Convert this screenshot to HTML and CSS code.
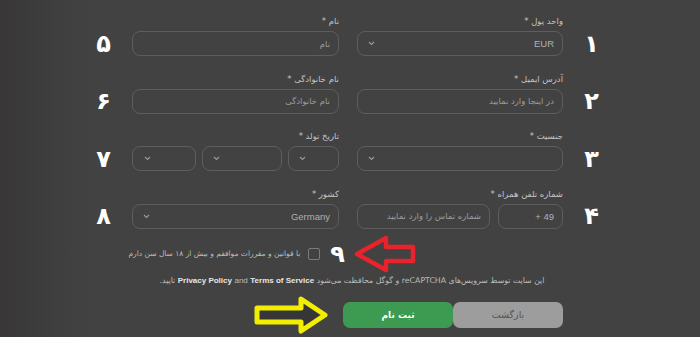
FILE: index.html
```html
<!DOCTYPE html>
<html lang="fa">
<head>
<meta charset="utf-8">
<title>ثبت نام</title>
<link rel="stylesheet" href="styles.css">
</head>
<body>
<div class="page">
  <form class="form" dir="rtl">
    <div class="num">۱</div>
    <div class="field right">
      <div class="label">واحد پول *</div>
      <div class="box select"><span class="val">EUR</span><svg class="chev" width="7" height="5" viewBox="0 0 7 5"><path d="M1 1l2.5 2.5L6 1" fill="none" stroke="#9a9a9a" stroke-width="1.1"/></svg></div>
    </div>
    <div class="field">
      <div class="label">نام *</div>
      <div class="box"><span class="ph">نام</span></div>
    </div>
    <div class="num">۵</div>

    <div class="num">۲</div>
    <div class="field right">
      <div class="label">آدرس ایمیل *</div>
      <div class="box"><span class="ph">در اینجا وارد نمایید</span></div>
    </div>
    <div class="field">
      <div class="label">نام خانوادگی *</div>
      <div class="box"><span class="ph">نام خانوادگی</span></div>
    </div>
    <div class="num">۶</div>

    <div class="num">۳</div>
    <div class="field right">
      <div class="label">جنسیت *</div>
      <div class="box select"><span class="val"></span><svg class="chev" width="7" height="5" viewBox="0 0 7 5"><path d="M1 1l2.5 2.5L6 1" fill="none" stroke="#9a9a9a" stroke-width="1.1"/></svg></div>
    </div>
    <div class="field">
      <div class="label">تاریخ تولد *</div>
      <div class="split">
        <div class="box select day"><span class="val"></span><svg class="chev" width="7" height="5" viewBox="0 0 7 5"><path d="M1 1l2.5 2.5L6 1" fill="none" stroke="#9a9a9a" stroke-width="1.1"/></svg></div>
        <div class="box select month"><span class="val"></span><svg class="chev" width="7" height="5" viewBox="0 0 7 5"><path d="M1 1l2.5 2.5L6 1" fill="none" stroke="#9a9a9a" stroke-width="1.1"/></svg></div>
        <div class="box select year"><span class="val"></span><svg class="chev" width="7" height="5" viewBox="0 0 7 5"><path d="M1 1l2.5 2.5L6 1" fill="none" stroke="#9a9a9a" stroke-width="1.1"/></svg></div>
      </div>
    </div>
    <div class="num">۷</div>

    <div class="num">۴</div>
    <div class="field right">
      <div class="label">شماره تلفن همراه *</div>
      <div class="split phone">
        <div class="box code"><span class="val">49 +</span></div>
        <div class="box tel"><span class="ph">شماره تماس را وارد نمایید</span></div>
      </div>
    </div>
    <div class="field">
      <div class="label">کشور *</div>
      <div class="box select"><span class="val">Germany</span><svg class="chev" width="7" height="5" viewBox="0 0 7 5"><path d="M1 1l2.5 2.5L6 1" fill="none" stroke="#9a9a9a" stroke-width="1.1"/></svg></div>
    </div>
    <div class="num">۸</div>
  </form>

  <div class="agree-row">
    <span class="agree-text" dir="rtl">با قوانین و مقررات موافقم و بیش از ۱۸ سال سن دارم</span>
    <span class="check"></span>
    <span class="num nine">۹</span>
    <svg class="arrow-red" width="64" height="38" viewBox="0 0 64 38"><path d="M4 19L33 3V12H60V26H33V35Z" fill="none" stroke="#e8232b" stroke-width="4.5" stroke-linejoin="round"/></svg>
  </div>

  <p class="notice" dir="rtl">این سایت توسط سرویس‌های reCAPTCHA و گوگل محافظت می‌شود <bdi><b>Terms of Service</b></bdi> <bdi>and</bdi> <bdi><b>Privacy Policy</b></bdi> تایید.</p>

  <div class="actions">
    <svg class="arrow-yellow" width="76" height="40" viewBox="0 0 76 40"><path d="M4 13H48V4L72 20L48 36V27H4Z" fill="#363636" stroke="#f2ee00" stroke-width="5" stroke-linejoin="round"/></svg>
    <div class="btns" dir="rtl">
      <button class="btn back" type="button">بازگشت</button>
      <button class="btn submit" type="button">ثبت نام</button>
    </div>
  </div>
</div>
</body>
</html>
```
FILE: styles.css
```css
html, body {
  margin: 0;
  padding: 0;
}
body {
  width: 700px;
  height: 337px;
  overflow: hidden;
  background: linear-gradient(to right, #393737 0px, #3f3e3e 50px, #424242 90px, #424242 100%);
  font-family: "Liberation Sans", "DejaVu Sans", sans-serif;
  color: #bdbdbd;
}
.page {
  width: 700px;
}
.form {
  width: 545px;
  margin: 0 0 0 75px;
  padding-top: 15px;
  display: grid;
  grid-template-columns: 57px 224px 207px 57px;
  row-gap: 16.5px;
}
.field {
  display: flex;
  flex-direction: column;
}
.field.right {
  padding-inline-end: 18px;
}
.label {
  font-family: "DejaVu Sans", sans-serif;
  font-size: 8.5px;
  line-height: 12px;
  margin-bottom: 4px;
  color: #c4c4c4;
}
.box {
  box-sizing: border-box;
  height: 25px;
  border: 1px solid #5e5e5e;
  border-radius: 8px;
  display: flex;
  align-items: center;
  justify-content: space-between;
  padding: 0 8px 0 10px;
  font-size: 9px;
}
.val {
  color: #b0b0b0;
  font-family: "Liberation Sans", "DejaVu Sans", sans-serif;
  font-size: 9.5px;
}
.ph {
  color: #9c9c9c;
  font-family: "DejaVu Sans", sans-serif;
  font-size: 8.5px;
}
.chev {
  display: block;
}
.split {
  display: flex;
  gap: 6px;
}
.split .day { width: 51px; }
.split .month { width: 80px; }
.split .year { width: 64px; padding-left: 11px; }
.split.phone { gap: 8px; }
.code { width: 65px; }
.tel { flex: 1; }
.num {
  align-self: end;
  height: 25px;
  display: flex;
  align-items: center;
  justify-content: center;
  font-family: "DejaVu Sans", sans-serif;
  font-weight: bold;
  font-size: 24px;
  color: #ffffff;
}
.agree-row {
  display: flex;
  justify-content: flex-end;
  align-items: center;
  padding-right: 283px;
  margin-top: 6px;
  height: 38px;
}
.agree-text {
  font-family: "DejaVu Sans", sans-serif;
  font-size: 7.5px;
  color: #bdbdbd;
}
.check {
  box-sizing: border-box;
  width: 12px;
  height: 12px;
  border: 1px solid #7a7a7a;
  border-radius: 2px;
  margin-left: 8px;
}
.num.nine {
  align-self: center;
  height: 30px;
  margin-left: 10px;
  margin-right: 8px;
}
.arrow-red {
  display: block;
}
.notice {
  margin: 2px 0 0;
  padding-left: 4px;
  text-align: center;
  font-family: "DejaVu Sans", sans-serif;
  font-size: 7.8px;
  line-height: 12px;
  color: #bdbdbd;
}
.notice b {
  color: #e6e6e6;
  font-family: "Liberation Sans", sans-serif;
  font-size: 8px;
}
.notice bdi {
  font-family: "Liberation Sans", sans-serif;
  font-size: 8px;
}
.actions {
  display: flex;
  justify-content: flex-end;
  align-items: center;
  padding-right: 137px;
  margin-top: 8px;
}
.arrow-yellow {
  display: block;
  margin-right: 14px;
}
.btns {
  display: flex;
}
.btn {
  width: 110px;
  height: 26px;
  border: none;
  border-radius: 7px;
  font-family: "DejaVu Sans", sans-serif;
  font-size: 9px;
  cursor: pointer;
}
.btn.back {
  background: #9d9d9d;
  color: #555555;
  font-size: 9.5px;
}
.btn.submit {
  background: #3d9b51;
  color: #ffffff;
  font-weight: bold;
}
```
